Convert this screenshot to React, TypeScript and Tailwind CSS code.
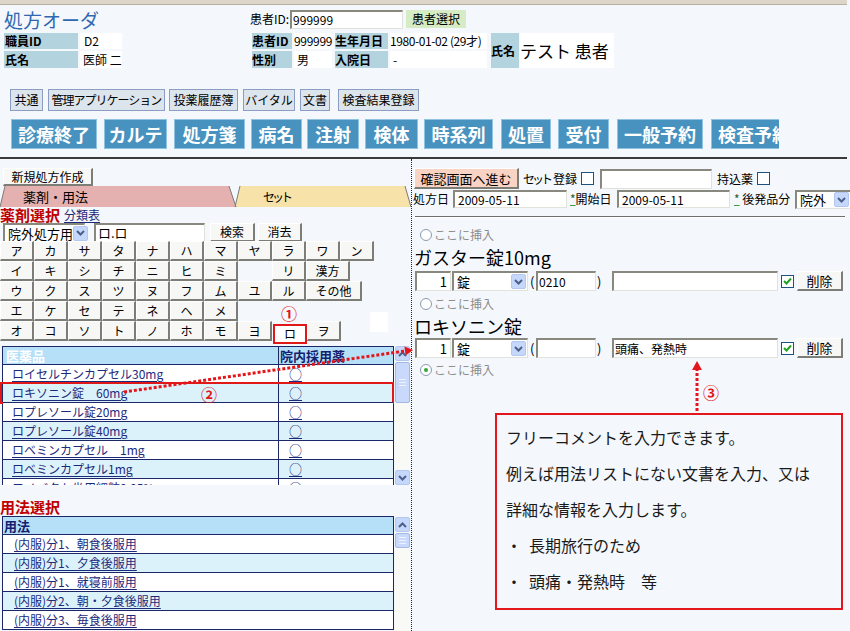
import React from 'react';

const bevelEdge =
  'border-t border-l border-t-white border-l-white border-r-2 border-b-2 border-r-[#7d7d78] border-b-[#7d7d78]';
const inset =
  'bg-white border-t-2 border-l-2 border-t-[#88887e] border-l-[#88887e] border-r border-b border-r-[#e2e2dc] border-b-[#e2e2dc]';
const label = 'bg-[#b3d3de] font-bold text-[12px] whitespace-nowrap';
const link = 'text-[#1c2a7c] underline decoration-[#1c2a7c] underline-offset-[2px]';

const nav1 = [
  ['共通', 'ml-[10px] w-[33px]'],
  ['管理アプリケーション', 'ml-[5px] w-[117px] tracking-[-1px]'],
  ['投薬履歴簿', 'ml-[4px] w-[69px]'],
  ['バイタル', 'ml-[5px] w-[52px]'],
  ['文書', 'ml-[5px] w-[30px]'],
  ['検査結果登録', 'ml-[8px] w-[81px]'],
];

const nav2 = [
  ['診療終了', 'ml-[11px] w-[86px]'],
  ['カルテ', 'ml-[7px] w-[63px]'],
  ['処方箋', 'ml-[7px] w-[71px]'],
  ['病名', 'ml-[6px] w-[51px]'],
  ['注射', 'ml-[5px] w-[52px]'],
  ['検体', 'ml-[6px] w-[53px]'],
  ['時系列', 'ml-[6px] w-[69px]'],
  ['処置', 'ml-[8px] w-[50px]'],
  ['受付', 'ml-[7px] w-[51px]'],
  ['一般予約', 'ml-[8px] w-[86px]'],
  ['検査予約', 'ml-[8px] w-[86px]'],
];

const kana: string[][] = [
  ['ア', 'カ', 'サ', 'タ', 'ナ', 'ハ', 'マ', 'ヤ', 'ラ', 'ワ', 'ン'],
  ['イ', 'キ', 'シ', 'チ', 'ニ', 'ヒ', 'ミ', '', 'リ', '漢方'],
  ['ウ', 'ク', 'ス', 'ツ', 'ヌ', 'フ', 'ム', 'ユ', 'ル', 'その他'],
  ['エ', 'ケ', 'セ', 'テ', 'ネ', 'ヘ', 'メ', '', '①'],
  ['オ', 'コ', 'ソ', 'ト', 'ノ', 'ホ', 'モ', 'ヨ', 'ロ', 'ヲ'],
];

const drugs = [
  'ロイセルチンカプセル30mg',
  'ロキソニン錠　60mg',
  'ロプレソール錠20mg',
  'ロプレソール錠40mg',
  'ロベミンカプセル　1mg',
  'ロベミンカプセル1mg',
  'ロメバクト坐用細粒0.05%',
];

const usages = [
  '(内服)分1、朝食後服用',
  '(内服)分1、夕食後服用',
  '(内服)分1、就寝前服用',
  '(内服)分2、朝・夕食後服用',
  '(内服)分3、毎食後服用',
];

function Chevron({ up = false }: { up?: boolean }) {
  return (
    <svg width="9" height="6" viewBox="0 0 9 6">
      <path
        d={up ? 'M1 5 L4.5 1.5 L8 5' : 'M1 1 L4.5 4.5 L8 1'}
        fill="none"
        stroke="#4a5f8a"
        strokeWidth="2"
      />
    </svg>
  );
}

function ArrowBox({ up = false, className = '' }: { up?: boolean; className?: string }) {
  return (
    <div
      className={`flex items-center justify-center rounded-[2px] border border-[#b3c7ef] bg-[#c5d7fb] ${className}`}
    >
      <Chevron up={up} />
    </div>
  );
}

function ScrollBar({ className, thumb }: { className: string; thumb: string }) {
  return (
    <div className={`flex w-[15px] shrink-0 flex-col bg-[#f9f9f6] ${className}`}>
      <ArrowBox up className="h-[15px] w-[15px] shrink-0" />
      <div
        className={`mt-[1px] flex shrink-0 flex-col items-center justify-center gap-[2px] rounded-[2px] border border-[#a4b9e6] bg-[#c9d9fb] ${thumb}`}
      >
        <div className="h-[1px] w-[7px] bg-[#eef3ff]" />
        <div className="h-[1px] w-[7px] bg-[#eef3ff]" />
        <div className="h-[1px] w-[7px] bg-[#eef3ff]" />
      </div>
      <div className="flex-1" />
      <ArrowBox className="h-[15px] w-[15px] shrink-0" />
    </div>
  );
}

function Select({ value, className }: { value: string; className: string }) {
  return (
    <div className={`${inset} flex items-center ${className}`}>
      <span className="flex-1 whitespace-nowrap pl-[3px]">{value}</span>
      <ArrowBox className="mr-[1px] h-[15px] w-[15px] shrink-0" />
    </div>
  );
}

function Check({ checked = false }: { checked?: boolean }) {
  return (
    <div className="flex h-[13px] w-[13px] items-center justify-center border border-[#1c5180] bg-white">
      {checked && (
        <svg width="9" height="8" viewBox="0 0 9 8">
          <path d="M1 4 L3.5 6.5 L8 1.5" fill="none" stroke="#21a121" strokeWidth="2" />
        </svg>
      )}
    </div>
  );
}

function Radio({ on = false }: { on?: boolean }) {
  return (
    <div className="flex h-[12px] w-[12px] items-center justify-center rounded-full border border-[#8a9bb0] bg-white">
      {on && <div className="h-[4px] w-[4px] rounded-full bg-[#36a436]" />}
    </div>
  );
}

function KanaCell({ k }: { k: string }) {
  if (k === '') return <div className="w-[34px]" />;
  if (k === '①')
    return (
      <div className="flex w-[34px] items-end justify-center text-[16px] font-bold leading-none text-[#e01818]">
        ①
      </div>
    );
  if (k === 'ロ')
    return (
      <div className="mt-[3px] ml-[1px] flex h-[20px] w-[34px] items-center justify-center border-2 border-[#e01818] bg-white text-[12px]">
        ロ
      </div>
    );
  const w = k === '漢方' ? 'w-[44px]' : k === 'その他' ? 'w-[56px]' : 'w-[34px]';
  return (
    <div
      className={`${bevelEdge} ${w} flex h-[20px] items-center justify-center bg-[#f7f7f5] text-[12px]`}
    >
      {k}
    </div>
  );
}

function Header() {
  return (
    <div className="flex h-[78px] pt-[3px]">
      <div className="w-[250px] pl-[4px]">
        <div className="h-[25px] text-[19px] leading-[24px] text-[#2f68b0]">処方オーダ</div>
        <div className="flex flex-col gap-[2px]">
          <div className="flex h-[16px]">
            <div className={`${label} w-[74px] pl-[1px] leading-[16px]`}>職員ID</div>
            <div className="ml-[2px] w-[42px] bg-white pl-[4px] text-[12px] leading-[16px]">D2</div>
          </div>
          <div className="flex h-[17px]">
            <div className={`${label} w-[74px] pl-[1px] leading-[17px]`}>氏名</div>
            <div className="ml-[2px] w-[42px] whitespace-nowrap bg-white pl-[3px] text-[12px] leading-[17px]">医師 二</div>
          </div>
        </div>
      </div>
      <div>
        <div className="flex h-[22px] items-center">
          <span className="text-[12px] whitespace-nowrap">患者ID:</span>
          <div className={`${inset} ml-[1px] h-[19px] w-[113px] pl-[1px] text-[12px] leading-[16px]`}>999999</div>
          <div className="ml-[3px] flex h-[18px] w-[60px] items-center justify-center bg-[#d5ecc5] text-[12px]">
            患者選択
          </div>
        </div>
        <div className="mt-[3px] flex">
          <div className="ml-[2px] flex flex-col gap-[2px]">
            <div className="flex h-[16px] leading-[16px]">
              <div className={`${label} w-[40px]`}>患者ID</div>
              <div className="ml-[2px] w-[38px] bg-white text-[12px] tracking-[-0.3px]">999999</div>
              <div className={`${label} ml-[3px] w-[53px]`}>生年月日</div>
              <div className="ml-[2px] w-[97px] whitespace-nowrap bg-white text-[12px] tracking-[-0.4px]">1980-01-02 (29才)</div>
            </div>
            <div className="flex h-[17px] leading-[17px]">
              <div className={`${label} w-[40px]`}>性別</div>
              <div className="ml-[2px] w-[38px] bg-white pl-[3px] text-[12px]">男</div>
              <div className={`${label} ml-[3px] w-[53px]`}>入院日</div>
              <div className="ml-[2px] w-[97px] bg-white pl-[3px] text-[12px]">-</div>
            </div>
          </div>
          <div className={`${label} ml-[4px] flex h-[35px] w-[28px] items-center`}>氏名</div>
          <div className="ml-[1px] flex h-[35px] w-[94px] items-center whitespace-nowrap bg-white text-[17px]">
            テスト 患者
          </div>
        </div>
      </div>
    </div>
  );
}

function Nav() {
  return (
    <>
      <div className="mt-[6px] flex h-[22px]">
        {nav1.map(([t, c]) => (
          <div
            key={t}
            className={`${c} flex h-[22px] items-center justify-center whitespace-nowrap border border-[#8b9dc3] bg-[#dce4ec] text-[12px]`}
          >
            {t}
          </div>
        ))}
      </div>
      <div className="mt-[8px] flex h-[30px] w-[779px] overflow-hidden">
        {nav2.map(([t, c]) => (
          <div
            key={t}
            className={`${c} flex h-[30px] shrink-0 items-center justify-center whitespace-nowrap border border-[#8ec4e2] bg-[#4892bf] text-[18px] font-bold text-white`}
          >
            {t}
          </div>
        ))}
      </div>
    </>
  );
}

function LeftPanel() {
  return (
    <div className="h-[472px] w-[412px] shrink-0 overflow-hidden border-r border-dotted border-r-[#222]">
      <div
        className={`${bevelEdge} mt-[9px] ml-[3px] flex h-[18px] w-[90px] items-center justify-center bg-[#f7f7f5] text-[12px]`}
      >
        新規処方作成
      </div>
      <div className="relative flex h-[21px]">
        <div className="flex w-[236px] shrink-0 items-center bg-[#e4b0b0] pl-[23px] text-[13px] [clip-path:polygon(5px_0,229px_0,236px_100%,0_100%)]">
          薬剤・用法
        </div>
        <div className="-ml-[1px] flex w-[176px] shrink-0 items-center bg-[#f7e3a9] pl-[28px] text-[12px] tracking-[-3px] [clip-path:polygon(5px_0,170px_0,176px_100%,0_100%)]">
          セット
        </div>
        <svg className="absolute left-0 top-0" width="411" height="21">
          <g stroke="#7a7a7a" strokeWidth="1">
            <line x1="5" y1="0" x2="0" y2="21" />
            <line x1="229" y1="0" x2="236" y2="21" />
            <line x1="240" y1="0" x2="235" y2="21" />
            <line x1="405" y1="0" x2="411" y2="21" />
          </g>
        </svg>
      </div>
      <div className="flex h-[15px] items-end">
        <span className="text-[15px] font-bold leading-[15px] text-[#c00000]">薬剤選択</span>
        <span className={`${link} ml-[4px] text-[12px] leading-[15px] text-[#1a3399]`}>分類表</span>
      </div>
      <div className="flex h-[18px] items-start *:shrink-0">
        <Select value="院外処方用" className="ml-[3px] mt-[1px] h-[19px] w-[82px] text-[13px]" />
        <div className={`${inset} ml-[9px] mt-[1px] h-[19px] w-[111px] pl-[2px] text-[13px] leading-[16px]`}>ロ.ロ</div>
        <div className={`${bevelEdge} ml-[5px] mt-[1px] flex h-[19px] w-[45px] items-center justify-center bg-[#f7f7f5] text-[12px]`}>
          検索
        </div>
        <div className={`${bevelEdge} ml-[3px] mt-[1px] flex h-[19px] w-[44px] items-center justify-center bg-[#f7f7f5] text-[12px]`}>
          消去
        </div>
      </div>
      <div className="relative mt-[1px] flex flex-col">
        {kana.map((row, i) => (
          <div key={i} className="flex h-[20px]">
            {row.map((k, j) => (
              <KanaCell key={j} k={k} />
            ))}
          </div>
        ))}
        <div className="absolute left-[370px] top-[71px] h-[20px] w-[18px] bg-white" />
      </div>
      <div className="mt-[5px] flex h-[139px] overflow-hidden">
        <div className="ml-[2px] w-[392px] shrink-0 self-start border border-[#1b2766]">
          <div className="flex h-[17px] bg-[#b6e0f7] text-[13px] font-bold leading-[17px]">
            <div className="w-[276px] border-r border-[#1b2766] pl-[3px] text-white">医薬品</div>
            <div className="flex-1 pl-[1px] text-[#14206e]">院内採用薬</div>
          </div>
          {drugs.map((d, i) => (
            <div
              key={d}
              className={`relative flex h-[19px] border-t border-[#1b2766] text-[12px] leading-[18px] ${
                i % 2 ? 'bg-[#dcf2fb]' : 'bg-white'
              }`}
            >
              <div className="w-[276px] whitespace-nowrap border-r border-[#1b2766] pl-[9px]">
                <span className={link}>{d}</span>
              </div>
              <div className="flex-1 pl-[10px] text-[13px]">
                <span className={link}>○</span>
              </div>
              {i === 1 && (
                <div className="absolute -left-[3px] -right-[1px] -top-[2px] -bottom-[2px] border-2 border-[#e01818]" />
              )}
            </div>
          ))}
        </div>
        <ScrollBar className="ml-[1px] h-[139px]" thumb="h-[41px]" />
      </div>
      <div className="mt-[13px] h-[18px] text-[15px] font-bold leading-[18px] text-[#c00000]">用法選択</div>
      <div className="flex h-[130px]">
        <div className="ml-[2px] w-[392px] shrink-0 self-start border border-[#1b2766]">
          <div className="h-[17px] bg-[#b6e0f7] pl-[1px] text-[13px] font-bold leading-[17px] text-[#14206e]">用法</div>
          {usages.map((u, i) => (
            <div
              key={u}
              className={`h-[19px] border-t border-[#1b2766] pl-[11px] text-[12px] leading-[18px] ${
                i % 2 ? 'bg-[#dcf2fb]' : 'bg-white'
              }`}
            >
              <span className={link}>{u}</span>
            </div>
          ))}
        </div>
        <ScrollBar className="ml-[1px] mt-[1px] h-[129px]" thumb="h-[15px]" />
      </div>
    </div>
  );
}

function InsertRow({ on = false, className }: { on?: boolean; className: string }) {
  return (
    <div className={`flex h-[14px] items-center pl-[8px] ${className}`}>
      <Radio on={on} />
      <span className="ml-[2px] text-[12px] text-[#8c8c8c]">ここに挿入</span>
    </div>
  );
}

function DrugRow({ days, comment, className }: { days: string; comment: string; className: string }) {
  return (
    <div className={`flex h-[20px] items-center text-[13px] *:shrink-0 ${className}`}>
      <div className={`${inset} ml-[3px] h-[20px] w-[36px] pr-[3px] text-right leading-[17px]`}>1</div>
      <Select value="錠" className="ml-[1px] h-[20px] w-[76px]" />
      <span className="ml-[2px] w-[6px]">(</span>
      <div className={`${inset} h-[20px] w-[60px] pl-[1px] text-[12px] leading-[17px]`}>{days}</div>
      <span className="ml-[1px] w-[6px]">)</span>
      <div className={`${inset} ml-[9px] h-[20px] w-[166px] pl-[1px] text-[12px] leading-[17px]`}>{comment}</div>
      <div className="ml-[3px]">
        <Check checked />
      </div>
      <div className={`${bevelEdge} ml-[3px] flex h-[20px] w-[46px] items-center justify-center bg-[#f7f7f5] text-[13px]`}>
        削除
      </div>
    </div>
  );
}

function RightPanel() {
  const star = 'text-[#2a5a2a] underline decoration-[#3aa03a]';
  return (
    <div className="flex flex-1 flex-col">
      <div className="mt-[9px] flex h-[21px] items-center text-[13px] *:shrink-0">
        <div className={`${bevelEdge} ml-[2px] flex h-[21px] w-[105px] items-center justify-center bg-[#f9d4c4]`}>
          確認画面へ進む
        </div>
        <span className="ml-[4px] w-[56px] whitespace-nowrap text-[12px]">
          <span className="tracking-[-3px]">セット</span>
          <span className="ml-[3px]">登録</span>
        </span>
        <div className="ml-[2px]">
          <Check />
        </div>
        <div className={`${inset} ml-[6px] h-[20px] w-[112px]`} />
        <span className="ml-[5px] w-[40px] whitespace-nowrap text-[12px]">持込薬</span>
        <div>
          <Check />
        </div>
      </div>
      <div className="mt-[1px] flex h-[18px] items-center text-[12px] *:shrink-0">
        <span className="w-[41px] whitespace-nowrap pl-[1px]">処方日</span>
        <div className={`${inset} h-[18px] w-[114px] pl-[3px] text-[12px] leading-[15px]`}>2009-05-11</div>
        <span className="ml-[3px] w-[47px] whitespace-nowrap">
          <span className={star}>*</span>開始日
        </span>
        <div className={`${inset} h-[18px] w-[113px] pl-[3px] text-[12px] leading-[15px]`}>2009-05-11</div>
        <span className="ml-[4px] w-[61px] whitespace-nowrap">
          <span className={star}>*</span> 後発品分
        </span>
        <Select value="院外" className="h-[19px] w-[56px] text-[13px]" />
      </div>
      <div className="mt-[8px] ml-[3px] h-[2px] w-[430px] border-t border-b border-t-[#6e6e6e] border-b-white" />
      <InsertRow className="mt-[10px]" />
      <div className="mt-[4px] h-[22px] pl-[2px] text-[18px] leading-[22px]">ガスター錠10mg</div>
      <DrugRow days="0210" comment="" className="mt-[3px]" />
      <InsertRow className="mt-[6px]" />
      <div className="mt-[4px] h-[22px] pl-[2px] text-[18px] leading-[22px]">ロキソニン錠</div>
      <DrugRow days="" comment="頭痛、発熱時" className="mt-[1px]" />
      <InsertRow on className="mt-[5px]" />
      <div className="mt-[36px] ml-[83px] h-[197px] w-[348px] border-2 border-[#e3161b] pt-[4px] pl-[9px] text-[16px] leading-[36px] text-[#1a1a1a]">
        <div>フリーコメントを入力できます。</div>
        <div>例えば用法リストにない文書を入力、又は</div>
        <div>詳細な情報を入力します。</div>
        <div className="flex">
          <span className="w-[23px]">・</span>
          <span>長期旅行のため</span>
        </div>
        <div className="flex">
          <span className="w-[23px]">・</span>
          <span>頭痛・発熱時　等</span>
        </div>
      </div>
    </div>
  );
}

function Annotations() {
  return (
    <>
      <svg className="pointer-events-none absolute left-0 top-0" width="850" height="631">
        <line x1="124" y1="392" x2="405" y2="351" stroke="#e3161b" strokeWidth="3" strokeDasharray="3 2" />
        <polygon points="413,350 405.6,355.5 404.4,346.5" fill="#e3161b" />
        <line x1="697" y1="411" x2="697" y2="369" stroke="#e3161b" strokeWidth="3" strokeDasharray="3 2" />
        <polygon points="697,361 692,370 702,370" fill="#e3161b" />
      </svg>
      <div className="pointer-events-none absolute left-[201px] top-[386px] text-[16px] font-bold leading-none text-[#e3161b]">
        ②
      </div>
      <div className="pointer-events-none absolute left-[703px] top-[384px] text-[16px] font-bold leading-none text-[#e3161b]">
        ③
      </div>
    </>
  );
}

export default function App() {
  return (
    <div className="relative h-[631px] w-[850px] overflow-hidden bg-[#f4f8fd] font-['Noto_Sans_CJK_JP','Noto_Sans',sans-serif] text-[12px] leading-none text-black">
      <div className="h-[5px] w-[847px] border-b border-[#b7b0a2] bg-[#ddd6c8]" />
      <Header />
      <Nav />
      <div className="mt-[8px] h-[2px] w-[847px] bg-[#3a3a3a]" />
      <div className="flex">
        <LeftPanel />
        <RightPanel />
      </div>
      <Annotations />
    </div>
  );
}
